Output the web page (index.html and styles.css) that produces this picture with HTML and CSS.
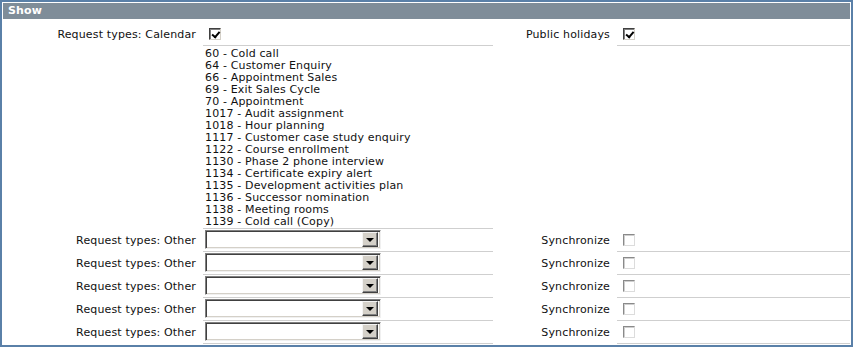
FILE: index.html
```html
<!DOCTYPE html>
<html lang="en">
<head>
  <meta charset="UTF-8"/>
  <title>Show</title>
  <link rel="stylesheet" href="styles.css">
</head>
<body>
  <div class="panel">
    <div class="panel-head">Show</div>

    <div class="form">
      <!-- Calendar row -->
      <div class="lbl first">Request types: Calendar</div>
      <div class="val first"><span class="chk on"></span></div>
      <div class="lbl first">Public holidays</div>
      <div class="val first"><span class="chk on"></span></div>

      <div class="lbl"></div>
      <div class="val list">
        <div>60 - Cold call</div>
        <div>64 - Customer Enquiry</div>
        <div>66 - Appointment Sales</div>
        <div>69 - Exit Sales Cycle</div>
        <div>70 - Appointment</div>
        <div>1017 - Audit assignment</div>
        <div>1018 - Hour planning</div>
        <div>1117 - Customer case study enquiry</div>
        <div>1122 - Course enrollment</div>
        <div>1130 - Phase 2 phone interview</div>
        <div>1134 - Certificate expiry alert</div>
        <div>1135 - Development activities plan</div>
        <div>1136 - Successor nomination</div>
        <div>1138 - Meeting rooms</div>
        <div>1139 - Cold call (Copy)</div>
      </div>
      <div class="lbl"></div>
      <div class="val empty"></div>

      <div class="lbl">Request types: Other</div>
      <div class="val"><span class="sel"><span class="sel-btn"></span></span></div>
      <div class="lbl">Synchronize</div>
      <div class="val"><span class="chk"></span></div>

      <div class="lbl">Request types: Other</div>
      <div class="val"><span class="sel"><span class="sel-btn"></span></span></div>
      <div class="lbl">Synchronize</div>
      <div class="val"><span class="chk"></span></div>

      <div class="lbl">Request types: Other</div>
      <div class="val"><span class="sel"><span class="sel-btn"></span></span></div>
      <div class="lbl">Synchronize</div>
      <div class="val"><span class="chk"></span></div>

      <div class="lbl">Request types: Other</div>
      <div class="val"><span class="sel"><span class="sel-btn"></span></span></div>
      <div class="lbl">Synchronize</div>
      <div class="val"><span class="chk"></span></div>

      <div class="lbl">Request types: Other</div>
      <div class="val"><span class="sel"><span class="sel-btn"></span></span></div>
      <div class="lbl">Synchronize</div>
      <div class="val"><span class="chk"></span></div>
    </div>
  </div>
</body>
</html>
```

FILE: styles.css
```css
* { box-sizing:border-box; margin:0; padding:0; }
body {
  background:#fff; color:#111;
  font-family:"DejaVu Sans", Verdana, sans-serif;
  font-size:11px; letter-spacing:0.15px;
}
.panel {
  width:853px; height:347px;
  border:2px solid #5a80a8;
  padding:1px;
}
.panel-head {
  height:16px; line-height:16px;
  background:#7f8d99; color:#fff;
  font-weight:bold; padding-left:5px;
}
.form {
  display:grid;
  grid-template-columns:200px 290px 124px 1fr;
}
.lbl {
  display:flex; align-items:center; justify-content:flex-end;
  padding-right:7px; height:23px;
}
.val {
  display:flex; align-items:center;
  height:23px; padding-left:2px;
  border-bottom:1px solid #cfcfcf;
}
.val.empty { border-bottom:0; }
.lbl.first, .val.first { height:27px; padding-top:4px; }
.val.first { padding-left:6px; }
.val.list {
  display:block; height:auto;
  padding:2px 0 0 2px; line-height:12px;
}
.chk {
  display:inline-block; width:12px; height:12px;
  border:1px solid; border-color:#8a8a8a #dcdcdc #dcdcdc #8a8a8a;
  box-shadow:inset 1px 1px 0 #cfcfcf;
  background:#fff; position:relative;
}
.val .chk { margin-left:4px; }
.val.first .chk { margin-left:0; }
.chk.on {
  border-color:#404040 #d4d0c8 #d4d0c8 #404040;
  box-shadow:inset 1px 1px 0 #808080;
}
.chk.on::after {
  content:""; position:absolute; left:2px; top:1px;
  width:3px; height:6px;
  border:solid #000; border-width:0 2px 2px 0;
  transform:rotate(40deg) translate(1px,-1px);
}
.sel {
  display:flex; justify-content:flex-end; align-items:center;
  width:176px; height:19px; margin-top:-2px;
  border:1px solid; border-color:#808080 #f0f0f0 #f0f0f0 #808080;
  box-shadow:inset 1px 1px 0 #404040, inset -1px -1px 0 #d4d0c8;
  background:#fff; padding-right:2px;
}
.sel-btn {
  width:16px; height:15px; position:relative;
  background:#d4d0c8;
  border:1px solid; border-color:#f4f4f4 #404040 #404040 #f4f4f4;
  box-shadow:inset -1px -1px 0 #808080;
}
.sel-btn::after {
  content:""; position:absolute; left:3px; top:5px;
  border:4px solid transparent; border-top:4px solid #000;
  border-bottom:0;
}
```
